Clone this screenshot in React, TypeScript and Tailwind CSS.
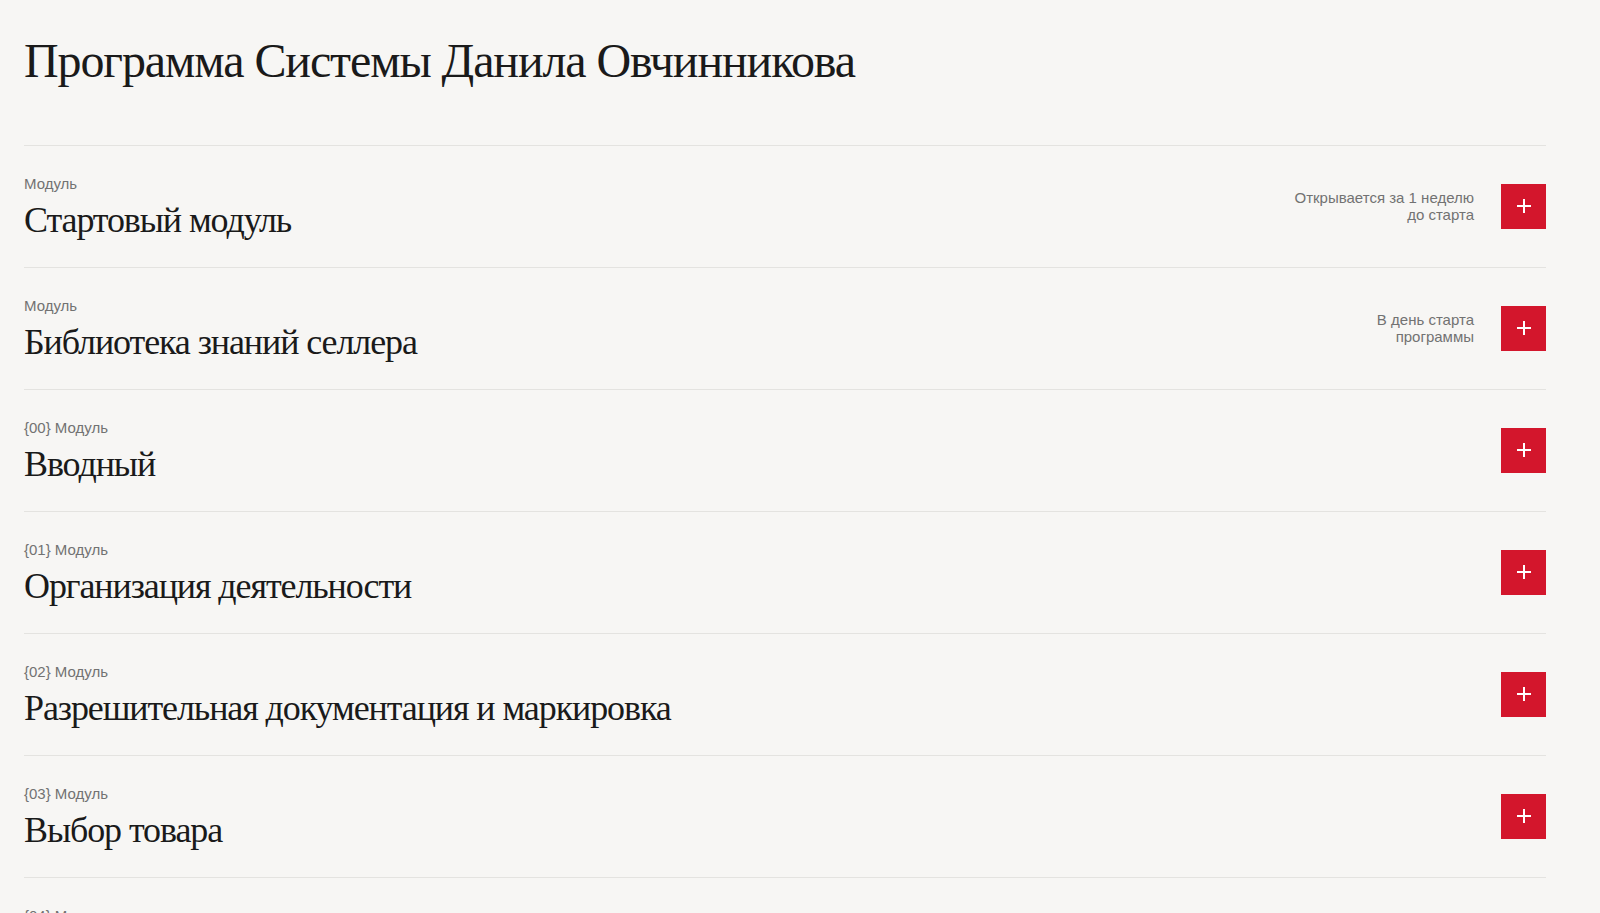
const modules = [
  { label: "Модуль", title: "Стартовый модуль", note: ["Открывается за 1 неделю", "до старта"] },
  { label: "Модуль", title: "Библиотека знаний селлера", note: ["В день старта", "программы"] },
  { label: "{00} Модуль", title: "Вводный" },
  { label: "{01} Модуль", title: "Организация деятельности" },
  { label: "{02} Модуль", title: "Разрешительная документация и маркировка" },
  { label: "{03} Модуль", title: "Выбор товара" },
  { label: "{04} Модуль", title: "Поиск поставщиков" },
];

function PlusButton() {
  return (
    <button className="flex h-[45px] w-[45px] shrink-0 items-center justify-center bg-[#d3162c]">
      <svg width="14" height="14" viewBox="0 0 14 14">
        <path d="M7 0v14M0 7h14" stroke="#fff" strokeWidth="2" />
      </svg>
    </button>
  );
}

export default function App() {
  return (
    <div className="min-h-screen overflow-hidden bg-[#f7f6f4] pl-6 pr-[54px] pt-[32px] text-[#1a1a1a]">
      <h1 className="font-['Liberation_Serif',serif] text-[48px] leading-[58px] tracking-[-1.1px]">
        Программа Системы Данила Овчинникова
      </h1>
      <div className="mt-[55px]">
        {modules.map((m) => (
          <div
            key={m.title}
            className="flex items-center justify-between border-t border-[#e4e3e0] pb-[25px] pt-[28px]"
          >
            <div>
              <div className="font-['Liberation_Sans',sans-serif] text-[15px] leading-[20px] text-[#727272]">
                {m.label}
              </div>
              <div className="mt-1 font-['Liberation_Serif',serif] text-[36px] leading-[44px] tracking-[-1.1px]">
                {m.title}
              </div>
            </div>
            <div className="-mt-[4px] flex items-center gap-[27px]">
              {m.note && (
                <div className="text-right font-['Liberation_Sans',sans-serif] text-[15px] leading-[17px] text-[#727272]">
                  {m.note[0]}
                  <br />
                  {m.note[1]}
                </div>
              )}
              <PlusButton />
            </div>
          </div>
        ))}
      </div>
    </div>
  );
}
